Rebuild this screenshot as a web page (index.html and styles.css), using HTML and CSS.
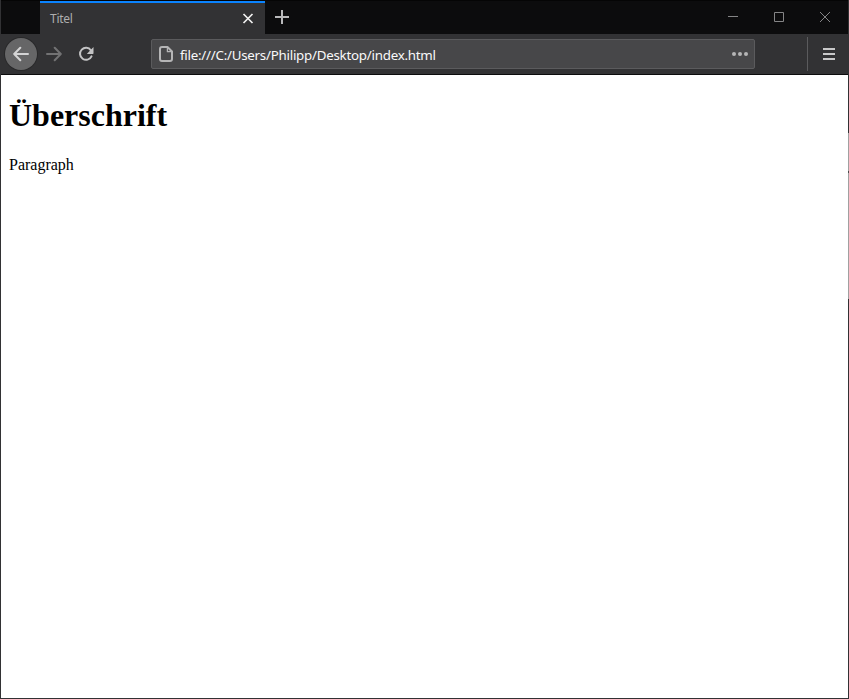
FILE: index.html
```html
<!DOCTYPE html>
<html lang="de">
<head>
<meta charset="utf-8">
<title>Titel</title>
<link rel="stylesheet" href="styles.css">
</head>
<body>
<div class="window">
  <header class="tabbar">
    <div class="tab">
      <span class="tab-title">Titel</span>
      <svg class="tab-close" width="12" height="12" viewBox="0 0 12 12"><path d="M1.5 1l9 9M10.5 1l-9 9"/></svg>
    </div>
    <svg class="new-tab" width="14" height="14" viewBox="0 0 14 14"><path d="M7 0v14M0 7h14"/></svg>
    <div class="controls">
      <svg width="46" height="33" viewBox="0 0 46 33"><path d="M18 15.5h10"/></svg>
      <svg width="46" height="33" viewBox="0 0 46 33"><path d="M18.5 11.5h9v9h-9z"/></svg>
      <svg width="46" height="33" viewBox="0 0 46 33"><path d="M18 11l10 10M28 11L18 21"/></svg>
    </div>
  </header>
  <nav class="toolbar">
    <span class="back"><svg width="16" height="16" viewBox="0 0 16 16"><path d="M1.3 8H15M7.3 1.8L1.2 8l6.1 6.2"/></svg></span>
    <svg class="forward" width="16" height="16" viewBox="0 0 16 16"><path d="M14.7 8H1M8.7 1.8L14.8 8l-6.1 6.2"/></svg>
    <svg class="reload" width="16" height="16" viewBox="0 0 16 16"><path class="arc" d="M12.9 4.3A6 6 0 1 0 13.5 10.3"/><path class="head" d="M15.5 1v6.2a.7.7 0 0 1-.7.7H8.8z"/></svg>
    <div class="address">
      <svg class="page-icon" width="14" height="16" viewBox="0 0 14 16"><path d="M3 1h5.5L13 5.5V13a2 2 0 0 1-2 2H3a2 2 0 0 1-2-2V3a2 2 0 0 1 2-2z"/><path class="fold" d="M8.4 1v4.7H13"/></svg>
      <span class="url">file:///C:/Users/Philipp/Desktop/index.html</span>
      <svg class="more" width="16" height="4" viewBox="0 0 16 4"><circle cx="2" cy="2" r="2"/><circle cx="8" cy="2" r="2"/><circle cx="14" cy="2" r="2"/></svg>
    </div>
    <span class="divider"></span>
    <svg class="menu" width="12" height="12" viewBox="0 0 12 12"><path d="M0 1h12M0 6h12M0 11h12"/></svg>
  </nav>
  <main class="page">
    <h1>Überschrift</h1>
    <p>Paragraph</p>
  </main>
</div>
</body>
</html>
```
FILE: styles.css
```css
* { box-sizing: border-box; }
body { margin: 0; }
svg { display: block; flex: none; fill: none; }

.window {
  width: 849px;
  height: 699px;
  display: flex;
  flex-direction: column;
  padding: 0 1px 1px;
  background:
    linear-gradient(#323234 133px, #a0a0a0 133px, #a0a0a0 171px, #4a4a4b 171px, #4a4a4b 173px, #a0a0a0 173px, #a0a0a0 299px, #323234 299px) right / 1px 100% no-repeat,
    #323234;
}

.tabbar {
  height: 34px;
  display: flex;
  align-items: stretch;
  padding-left: 39px;
  background: #0c0c0d;
  border-top: 1px solid #050505;
}
.tab {
  width: 225px;
  display: flex;
  align-items: center;
  justify-content: space-between;
  padding: 0 11px 0 10px;
  background: #323234;
  border-top: 2px solid #0a84ff;
}
.tab-title {
  font: 12px/16px "Noto Sans", sans-serif;
  color: #aeaeae;
  letter-spacing: -0.25px;
  margin-top: 1px;
}
.tab-close { stroke: #f0f0f0; stroke-width: 1.7; }
.new-tab { stroke: #b9b9ba; stroke-width: 2; margin: 9px 0 0 10px; }
.controls {
  display: flex;
  margin-left: auto;
  stroke: #858586;
  stroke-width: 1;
}

.toolbar {
  height: 41px;
  display: flex;
  align-items: center;
  padding-left: 4px;
  background: #323234;
  border-bottom: 1px solid #0c0c0d;
}
.back {
  width: 32px;
  height: 32px;
  display: grid;
  place-items: center;
  border-radius: 50%;
  background: #666667;
  box-shadow: 0 0 0 1px #29292a;
  stroke: #d4d4d5;
  stroke-width: 2;
  stroke-linecap: round;
  stroke-linejoin: round;
}
.forward {
  margin-left: 9px;
  stroke: #727273;
  stroke-width: 2;
  stroke-linecap: round;
  stroke-linejoin: round;
}
.reload { margin-left: 16px; }
.arc { stroke: #c3c3c4; stroke-width: 2; stroke-linecap: round; }
.head { fill: #c3c3c4; }
.address {
  width: 604px;
  height: 30px;
  display: flex;
  align-items: center;
  margin-left: 57px;
  padding: 0 6px 0 7px;
  background: #474749;
  border: 1px solid #5b5b5d;
  border-radius: 2px;
}
.page-icon { stroke: #b5b5b6; stroke-width: 2; stroke-linejoin: round; }
.fold { stroke-width: 1.3; }
.url {
  margin: 2px 0 0 7px;
  font: 13.33px/20px "Noto Sans", sans-serif;
  letter-spacing: -0.245px;
  color: #f9f9fa;
  white-space: nowrap;
}
.more { margin-left: auto; fill: #b5b5b6; }
.divider {
  width: 1px;
  height: 34px;
  margin-left: 52px;
  background: #5b5b5d;
}
.menu { margin-left: 15px; stroke: #c8c8c9; stroke-width: 2; }

.page {
  flex: 1;
  padding: 0 8px;
  background: #fff;
  color: #000;
  font: 16px "Liberation Serif", serif;
}
.page h1 {
  margin: 21px 0 22px;
  font-size: 32px;
  line-height: 38px;
}
.page p { margin: 0; line-height: 18px; }
```
